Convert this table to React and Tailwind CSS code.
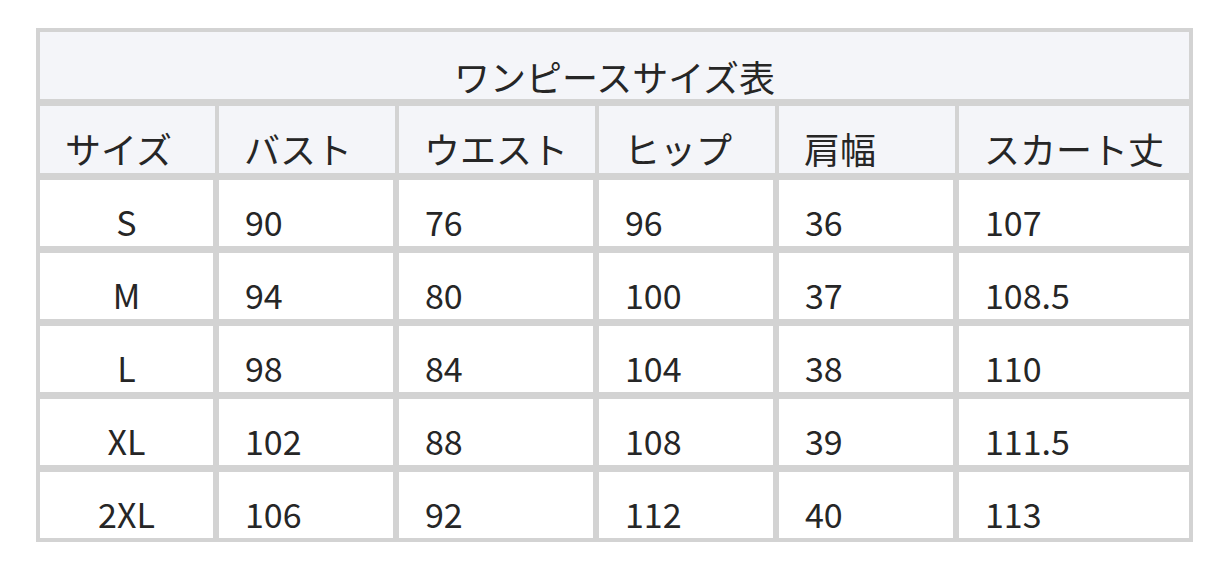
const headers = ["サイズ", "バスト", "ウエスト", "ヒップ", "肩幅", "スカート丈"];

const rows = [
  ["S", "90", "76", "96", "36", "107"],
  ["M", "94", "80", "100", "37", "108.5"],
  ["L", "98", "84", "104", "38", "110"],
  ["XL", "102", "88", "108", "39", "111.5"],
  ["2XL", "106", "92", "112", "40", "113"],
];

const headWidths = ["w-[175px]", "w-[176px]", "w-[196px]", "w-[176px]", "w-[176px]", "w-[230px]"];
const bodyWidths = ["w-[173px]", "w-[174px]", "w-[194px]", "w-[174px]", "w-[174px]", "w-[230px]"];

export default function App() {
  return (
    <div
      className="min-h-[569px] w-[1228px] bg-white pl-[36px] pt-[28px] text-[34px] text-[#262626]"
      style={{ fontFamily: '"Noto Sans CJK JP", "Noto Sans", sans-serif' }}
    >
      <div className="flex w-[1157px] flex-col gap-[7px] bg-[#d3d3d3] p-[4px]">
        <div className="flex h-[67px] items-center justify-center bg-[#f4f5f9] pt-[20px] text-[36px] leading-none">
          ワンピースサイズ表
        </div>
        <div className="flex h-[67px] gap-[4px]">
          {headers.map((h, i) => (
            <div
              key={h}
              className={`${headWidths[i]} flex items-center bg-[#f4f5f9] pl-[25px] pt-[17px] text-[36px] leading-none`}
            >
              {h}
            </div>
          ))}
        </div>
        {rows.map((row) => (
          <div key={row[0]} className="flex h-[66px] gap-[6px]">
            {row.map((v, i) => (
              <div
                key={i}
                className={`${bodyWidths[i]} flex items-center bg-white pt-[17px] leading-none ${i === 0 ? "justify-center" : "pl-[26px]"}`}
              >
                {v}
              </div>
            ))}
          </div>
        ))}
      </div>
    </div>
  );
}
